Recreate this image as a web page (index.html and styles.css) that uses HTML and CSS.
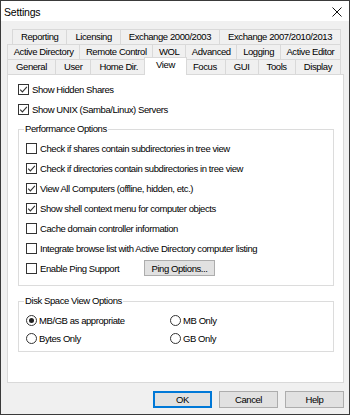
FILE: index.html
```html
<!DOCTYPE html>
<html>
<head>
    <title>Settings</title>
    <link rel="stylesheet" href="styles.css">
</head>
<body>
    <div class="window">
        <div class="titlebar">
            <span class="title">Settings</span>
            <svg class="close" width="10" height="10" viewBox="0 0 10 10">
                <path d="M0.5 0.5 L9.5 9.5 M9.5 0.5 L0.5 9.5" stroke="#111" stroke-width="1" fill="none"/>
            </svg>
        </div>

        <div class="dialog-body">
            <div class="tabs">
                <div class="tab-row row-back">
                    <div class="tab">Reporting</div>
                    <div class="tab">Licensing</div>
                    <div class="tab">Exchange 2000/2003</div>
                    <div class="tab">Exchange 2007/2010/2013</div>
                </div>
                <div class="tab-row">
                    <div class="tab">Active Directory</div>
                    <div class="tab">Remote Control</div>
                    <div class="tab">WOL</div>
                    <div class="tab">Advanced</div>
                    <div class="tab">Logging</div>
                    <div class="tab">Active Editor</div>
                </div>
                <div class="tab-row">
                    <div class="tab">General</div>
                    <div class="tab">User</div>
                    <div class="tab">Home Dir.</div>
                    <div class="tab active">View</div>
                    <div class="tab">Focus</div>
                    <div class="tab">GUI</div>
                    <div class="tab">Tools</div>
                    <div class="tab">Display</div>
                </div>
            </div>

            <div class="tab-panel">
                <div class="check-row">
                    <span class="checkbox checked"></span>
                    <span>Show Hidden Shares</span>
                </div>
                <div class="check-row">
                    <span class="checkbox checked"></span>
                    <span>Show UNIX (Samba/Linux) Servers</span>
                </div>

                <fieldset class="group perf">
                    <legend>Performance Options</legend>
                    <div class="check-row">
                        <span class="checkbox"></span>
                        <span>Check if shares contain subdirectories in tree view</span>
                    </div>
                    <div class="check-row">
                        <span class="checkbox checked"></span>
                        <span>Check if directories contain subdirectories in tree view</span>
                    </div>
                    <div class="check-row">
                        <span class="checkbox checked"></span>
                        <span>View All Computers (offline, hidden, etc.)</span>
                    </div>
                    <div class="check-row">
                        <span class="checkbox checked"></span>
                        <span>Show shell context menu for computer objects</span>
                    </div>
                    <div class="check-row">
                        <span class="checkbox"></span>
                        <span>Cache domain controller information</span>
                    </div>
                    <div class="check-row">
                        <span class="checkbox"></span>
                        <span>Integrate browse list with Active Directory computer listing</span>
                    </div>
                    <div class="check-row">
                        <span class="checkbox"></span>
                        <span class="ping-label">Enable Ping Support</span>
                        <button class="ping-btn">Ping Options...</button>
                    </div>
                </fieldset>

                <fieldset class="group disk">
                    <legend>Disk Space View Options</legend>
                    <div class="radio-grid">
                        <div class="radio-row">
                            <span class="radio selected"></span>
                            <span>MB/GB as appropriate</span>
                        </div>
                        <div class="radio-row">
                            <span class="radio"></span>
                            <span>MB Only</span>
                        </div>
                        <div class="radio-row">
                            <span class="radio"></span>
                            <span>Bytes Only</span>
                        </div>
                        <div class="radio-row">
                            <span class="radio"></span>
                            <span>GB Only</span>
                        </div>
                    </div>
                </fieldset>
            </div>

            <div class="buttons">
                <button class="default">OK</button>
                <button>Cancel</button>
                <button>Help</button>
            </div>
        </div>
    </div>
</body>
</html>
```

FILE: styles.css
```css
body {
    margin: 0;
    font-family: "Liberation Sans", Arial, sans-serif;
    font-size: 9.5px;
    letter-spacing: -0.42px;
    color: #000;
}
.window {
    width: 350px;
    height: 415px;
    box-sizing: border-box;
    border: 1px solid #3a3a3a;
    background: #f0f0f0;
    display: flex;
    flex-direction: column;
}
.titlebar {
    height: 20px;
    background: #fff;
    display: flex;
    align-items: center;
    justify-content: space-between;
    padding: 1px 7px 0 3px;
    box-sizing: border-box;
}
.title {
    font-size: 10.5px;
    letter-spacing: -0.2px;
}
.dialog-body {
    padding: 8px 5px 0 6px;
}

/* tabs */
.tab-row {
    display: flex;
    height: 15px;
    margin-right: 3px;
}
.row-back {
    margin-left: 5px;
}
.tab {
    flex: 1 1 auto;
    text-align: center;
    line-height: 14px;
    padding: 0 3px;
    border: 1px solid #d9d9d9;
    border-bottom: none;
    margin-left: -1px;
    background: #f0f0f0;
    white-space: nowrap;
}
.tab:first-child {
    margin-left: 0;
}
.tab.active {
    background: #fff;
    position: relative;
    z-index: 1;
    margin: -2px -2px -1px -3px;
    padding: 0 6px;
    line-height: 13px;
    height: 17px;
}

.tab-panel {
    height: 309px;
    box-sizing: border-box;
    border: 1px solid #d9d9d9;
    background: #fff;
    padding: 4px 9px 0 10px;
}
.check-row {
    height: 20px;
    display: flex;
    align-items: center;
    white-space: nowrap;
}
.checkbox {
    width: 11px;
    height: 11px;
    box-sizing: border-box;
    border: 1px solid #333;
    background: #fff;
    margin-right: 3px;
    flex: none;
}
.checkbox.checked {
    background: #fff url("data:image/svg+xml,%3Csvg xmlns='http://www.w3.org/2000/svg' width='9' height='9' viewBox='0 0 9 9'%3E%3Cpath d='M1.2 4.6 L3.4 6.9 L7.9 1.8' stroke='%23333' stroke-width='1.1' fill='none'/%3E%3C/svg%3E") no-repeat center;
}

/* group boxes */
.group {
    border: 1px solid #dcdcdc;
    margin: 0;
    min-width: 0;
}
.group legend {
    padding: 0 1px;
    margin-left: -2px;
    line-height: 12px;
}
.perf {
    margin-top: 4px;
    padding: 3px 0 7px 7px;
}
.disk {
    margin-top: 9px;
    padding: 4px 0 4px 7px;
}
.ping-label {
    width: 104px;
}
.ping-btn {
    width: 71px;
    height: 16px;
    padding: 0;
    font: inherit;
    letter-spacing: inherit;
    background: #e1e1e1;
    border: 1px solid #adadad;
    color: #000;
}
.radio-grid {
    display: grid;
    grid-template-columns: 144px 1fr;
}
.radio-row {
    height: 18px;
    display: flex;
    align-items: center;
}
.radio {
    width: 11px;
    height: 11px;
    box-sizing: border-box;
    border: 1px solid #333;
    border-radius: 50%;
    margin-right: 2px;
    flex: none;
    display: flex;
    align-items: center;
    justify-content: center;
}
.radio.selected::after {
    content: "";
    width: 5px;
    height: 5px;
    border-radius: 50%;
    background: #222;
}

/* dialog buttons */
.buttons {
    display: flex;
    justify-content: flex-end;
    gap: 7px;
    margin-top: 8px;
}
.buttons button {
    width: 59px;
    height: 17px;
    padding: 0;
    font: inherit;
    letter-spacing: inherit;
    color: #000;
    background: #e1e1e1;
    border: 1px solid #adadad;
}
.buttons button.default {
    border-color: #0078d7;
    box-shadow: inset 0 0 0 1px #0078d7;
}
```
